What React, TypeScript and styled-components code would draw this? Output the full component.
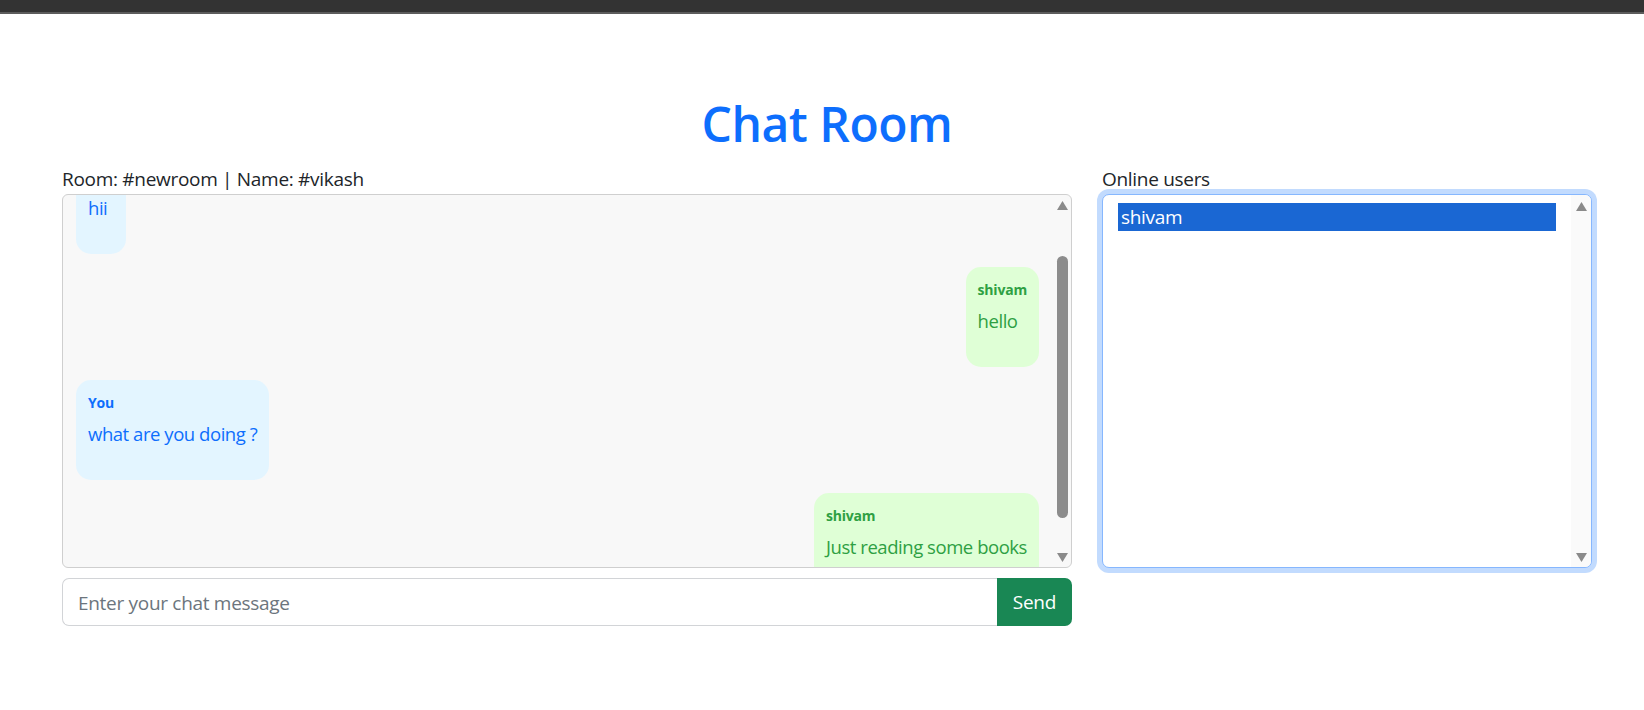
import React from "react";
import styled, { createGlobalStyle } from "styled-components";

type Message = { from: string; text: string; mine: boolean };

const messages: Message[] = [
  { from: "You", text: "hii", mine: true },
  { from: "shivam", text: "hello", mine: false },
  { from: "You", text: "what are you doing ?", mine: true },
  { from: "shivam", text: "Just reading some books", mine: false },
];

const users = ["shivam"];

const Arrow = ({ down }: { down?: boolean }) => (
  <svg width="11" height="9" viewBox="0 0 11 9">
    <path d={down ? "M0 0 L11 0 L5.5 9 Z" : "M5.5 0 L11 9 L0 9 Z"} fill="#8a8a8a" />
  </svg>
);

export default function App() {
  const paneRef = React.useRef<HTMLDivElement>(null);

  React.useLayoutEffect(() => {
    if (paneRef.current) paneRef.current.scrollTop = 54;
  }, []);

  return (
    <>
      <GlobalStyle />
      <TopBar />
      <Main>
        <Title>Chat Room</Title>
        <Row>
          <ChatCol>
            <Label>Room: #newroom | Name: #vikash</Label>
            <ChatBox>
              <MessagePane ref={paneRef}>
                {messages.map((m, i) => (
                  <Bubble key={i} mine={m.mine}>
                    <Sender>{m.from}</Sender>
                    <Text>{m.text}</Text>
                  </Bubble>
                ))}
              </MessagePane>
              <ChatRail>
                <Arrow />
                <Thumb />
                <Arrow down />
              </ChatRail>
            </ChatBox>
            <InputGroup>
              <ChatInput placeholder="Enter your chat message" />
              <SendButton>Send</SendButton>
            </InputGroup>
          </ChatCol>
          <UsersCol>
            <Label>Online users</Label>
            <UserBox>
              <UserList>
                {users.map((u) => (
                  <UserOption key={u} selected>
                    {u}
                  </UserOption>
                ))}
              </UserList>
              <UserRail>
                <Arrow />
                <Arrow down />
              </UserRail>
            </UserBox>
          </UsersCol>
        </Row>
      </Main>
    </>
  );
}

const GlobalStyle = createGlobalStyle`
  body {
    margin: 0;
    background: #fff;
    color: #212529;
    font-family: "Open Sans", "Noto Sans", sans-serif;
  }
`;

const TopBar = styled.div`
  height: 12px;
  background: #333333;
  border-bottom: 2px solid #5c5c5c;
`;

const Main = styled.main`
  padding: 0 52px 0 62px;
`;

const Title = styled.h1`
  margin: 80px 0 10px;
  text-align: center;
  font-size: 48px;
  line-height: 60px;
  font-weight: 600;
  letter-spacing: -0.5px;
  color: #0d6efd;
`;

const Row = styled.div`
  display: flex;
  gap: 30px;
`;

const ChatCol = styled.div`
  flex: 0 0 1010px;
  display: flex;
  flex-direction: column;
`;

const UsersCol = styled.div`
  flex: 1;
  display: flex;
  flex-direction: column;
`;

const Label = styled.div`
  font-size: 19px;
  line-height: 30px;
  letter-spacing: -0.3px;
`;

const ChatBox = styled.div`
  height: 374px;
  box-sizing: border-box;
  display: flex;
  border: 1px solid #cfcfcf;
  border-radius: 6px;
  background: #f8f8f8;
  overflow: hidden;
`;

const MessagePane = styled.div`
  flex: 1;
  display: flex;
  flex-direction: column;
  gap: 13px;
  padding: 13px 15px 13px 13px;
  overflow-y: scroll;
  scrollbar-width: none;
`;

const Bubble = styled.div<{ mine: boolean }>`
  flex: none;
  align-self: ${(p) => (p.mine ? "flex-start" : "flex-end")};
  padding: 12px;
  border-radius: 15px;
  background: ${(p) => (p.mine ? "#e3f5ff" : "#dfffd6")};
  color: ${(p) => (p.mine ? "#0d6efd" : "#2ea043")};
`;

const Sender = styled.div`
  font-size: 14px;
  line-height: 22px;
  font-weight: 700;
  letter-spacing: -0.2px;
  margin-bottom: 5px;
`;

const Text = styled.p`
  margin: 0 0 19px;
  font-size: 18.5px;
  line-height: 30px;
  letter-spacing: -0.45px;
  white-space: nowrap;
`;

const ChatRail = styled.div`
  flex: 0 0 17px;
  display: flex;
  flex-direction: column;
  align-items: center;
  padding: 6px 0 5px;
  box-sizing: border-box;
`;

const Thumb = styled.div`
  width: 11px;
  height: 262px;
  margin: 46px 0 35px;
  border-radius: 6px;
  background: #8c8c8c;
`;

const InputGroup = styled.div`
  display: flex;
  margin-top: 10px;
`;

const ChatInput = styled.input`
  flex: 1;
  height: 48px;
  box-sizing: border-box;
  padding: 2px 15px 0;
  border: 1px solid #d2d4d7;
  border-right: none;
  border-radius: 7px 0 0 7px;
  font-family: inherit;
  font-size: 19px;
  letter-spacing: -0.3px;
  color: #212529;
  outline: none;
  &::placeholder {
    color: #6c757d;
  }
`;

const SendButton = styled.button`
  height: 48px;
  padding: 0 16px;
  border: none;
  border-radius: 0 7px 7px 0;
  background: #198754;
  color: #fff;
  font-family: inherit;
  font-size: 19px;
  letter-spacing: -0.3px;
`;

const UserBox = styled.div`
  height: 374px;
  box-sizing: border-box;
  display: flex;
  border: 1px solid #86b7fe;
  border-radius: 7px;
  box-shadow: 0 0 0 5px rgba(13, 110, 253, 0.25);
  background: #fff;
  overflow: hidden;
`;

const UserList = styled.div`
  flex: 1;
  padding: 8px 15px 0;
`;

const UserOption = styled.div<{ selected?: boolean }>`
  height: 28px;
  padding-left: 3px;
  font-size: 19px;
  line-height: 28px;
  letter-spacing: -0.3px;
  background: ${(p) => (p.selected ? "#1a67d3" : "transparent")};
  color: ${(p) => (p.selected ? "#fff" : "#212529")};
`;

const UserRail = styled.div`
  flex: 0 0 20px;
  display: flex;
  flex-direction: column;
  align-items: center;
  justify-content: space-between;
  padding: 7px 0 5px;
  box-sizing: border-box;
  background: #fafafa;
`;
